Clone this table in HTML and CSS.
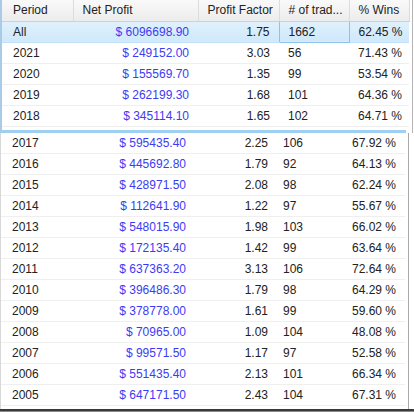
FILE: index.html
```html
<!DOCTYPE html>
<html>
<head>
<meta charset="utf-8">
<link rel="stylesheet" href="styles.css">
</head>
<body>
<div class="frame">
  <div class="top">
    <table class="grid grid-top">
      <colgroup><col class="c1"><col class="c2"><col class="c3"><col class="c4"><col class="c5"></colgroup>
      <thead>
        <tr><th>Period</th><th>Net Profit</th><th>Profit Factor</th><th># of trad...</th><th>% Wins</th></tr>
      </thead>
      <tbody>
        <tr class="sel"><td>All</td><td class="money">$ 6096698.90</td><td class="num">1.75</td><td class="focus">1662</td><td class="num">62.45 %</td></tr>
        <tr><td>2021</td><td class="money">$ 249152.00</td><td class="num">3.03</td><td>56</td><td class="num">71.43 %</td></tr>
        <tr><td>2020</td><td class="money">$ 155569.70</td><td class="num">1.35</td><td>99</td><td class="num">53.54 %</td></tr>
        <tr><td>2019</td><td class="money">$ 262199.30</td><td class="num">1.68</td><td>101</td><td class="num">64.36 %</td></tr>
        <tr><td>2018</td><td class="money">$ 345114.10</td><td class="num">1.65</td><td>102</td><td class="num">64.71 %</td></tr>
      </tbody>
    </table>
    <div class="tail"></div>
  </div>
  <div class="bottom">
    <table class="grid grid-bottom">
      <colgroup><col class="d1"><col class="d2"><col class="d3"><col class="d4"><col class="d5"></colgroup>
      <tbody>
        <tr><td>2017</td><td class="money">$ 595435.40</td><td class="num">2.25</td><td>106</td><td class="num">67.92 %</td></tr>
        <tr><td>2016</td><td class="money">$ 445692.80</td><td class="num">1.79</td><td>92</td><td class="num">64.13 %</td></tr>
        <tr><td>2015</td><td class="money">$ 428971.50</td><td class="num">2.08</td><td>98</td><td class="num">62.24 %</td></tr>
        <tr><td>2014</td><td class="money">$ 112641.90</td><td class="num">1.22</td><td>97</td><td class="num">55.67 %</td></tr>
        <tr><td>2013</td><td class="money">$ 548015.90</td><td class="num">1.98</td><td>103</td><td class="num">66.02 %</td></tr>
        <tr><td>2012</td><td class="money">$ 172135.40</td><td class="num">1.42</td><td>99</td><td class="num">63.64 %</td></tr>
        <tr><td>2011</td><td class="money">$ 637363.20</td><td class="num">3.13</td><td>106</td><td class="num">72.64 %</td></tr>
        <tr><td>2010</td><td class="money">$ 396486.30</td><td class="num">1.79</td><td>98</td><td class="num">64.29 %</td></tr>
        <tr><td>2009</td><td class="money">$ 378778.00</td><td class="num">1.61</td><td>99</td><td class="num">59.60 %</td></tr>
        <tr><td>2008</td><td class="money">$ 70965.00</td><td class="num">1.09</td><td>104</td><td class="num">48.08 %</td></tr>
        <tr><td>2007</td><td class="money">$ 99571.50</td><td class="num">1.17</td><td>97</td><td class="num">52.58 %</td></tr>
        <tr><td>2006</td><td class="money">$ 551435.40</td><td class="num">2.13</td><td>101</td><td class="num">66.34 %</td></tr>
        <tr><td>2005</td><td class="money">$ 647171.50</td><td class="num">2.43</td><td>104</td><td class="num">67.31 %</td></tr>
      </tbody>
    </table>
  </div>
</div>
</body>
</html>
```
FILE: styles.css
```css
html, body {
  margin: 0;
  padding: 0;
  background: #ffffff;
}
body {
  font-family: "Liberation Sans", Arial, sans-serif;
  font-size: 12px;
  color: #222;
}
.frame {
  width: 414px;
  height: 412px;
  box-sizing: border-box;
  display: flex;
  flex-direction: column;
  overflow: hidden;
  position: relative;
}
.top {
  width: 413px;
  border-left: 2px solid #a9cbe8;
  border-right: 1px solid #b4b4b4;
  box-sizing: border-box;
}
.tail {
  width: 404px;
  height: 3px;
  background: #fff;
  border-bottom: 3px solid #9fd0f2;
}
.grid {
  border-collapse: collapse;
  table-layout: fixed;
}
.grid-top { width: 407px; }
.grid-bottom { width: 404px; }
.c1 { width: 71px; }
.c2 { width: 125px; }
.c3 { width: 81px; }
.c4 { width: 70px; }
.c5 { width: 60px; }
.d1 { width: 70px; }
.d2 { width: 124px; }
.d3 { width: 79px; }
.d4 { width: 69px; }
.d5 { width: 62px; }
th {
  height: 21px;
  padding: 0 0 0 9px;
  text-align: left;
  font-weight: normal;
  color: #222;
  background: linear-gradient(#f9f9f9, #ececec);
  border-right: 1px solid #dcdcdc;
  border-bottom: 1px solid #d0d0d0;
  white-space: nowrap;
  overflow: hidden;
  box-sizing: border-box;
}
th:first-child { padding-left: 11px; }
td {
  height: 21px;
  padding: 0 0 0 9px;
  border-bottom: 1px solid #efefef;
  white-space: nowrap;
  overflow: hidden;
  box-sizing: border-box;
}
td:first-child { padding-left: 11px; }
td.money {
  text-align: right;
  padding-right: 9px;
  color: #3b3bf5;
}
td.num {
  text-align: right;
  padding-right: 9px;
}
.grid-bottom td.num { padding-right: 6px; }
.grid-bottom td:nth-child(5) { padding-right: 9px; }
.sel td {
  background: linear-gradient(#e0f1fc, #cfe8fa);
  border-bottom: 1px solid #bfe0f6;
}
.sel td.focus {
  border: 1px solid #8cc3ea;
}
.bottom {
  flex: 1;
  width: 409px;
  border-left: 1px solid #d8d8d8;
  border-right: 1px solid #a9a9a9;
  border-bottom: 2px solid #b9d9f0;
  box-sizing: border-box;
  overflow: hidden;
}
.frame::after {
  content: "";
  position: absolute;
  left: 0;
  right: 0;
  bottom: 0;
  height: 3px;
  background: linear-gradient(#3a3a3a, #3a3a3a 66%, #8a8a8a 66%);
}
```
